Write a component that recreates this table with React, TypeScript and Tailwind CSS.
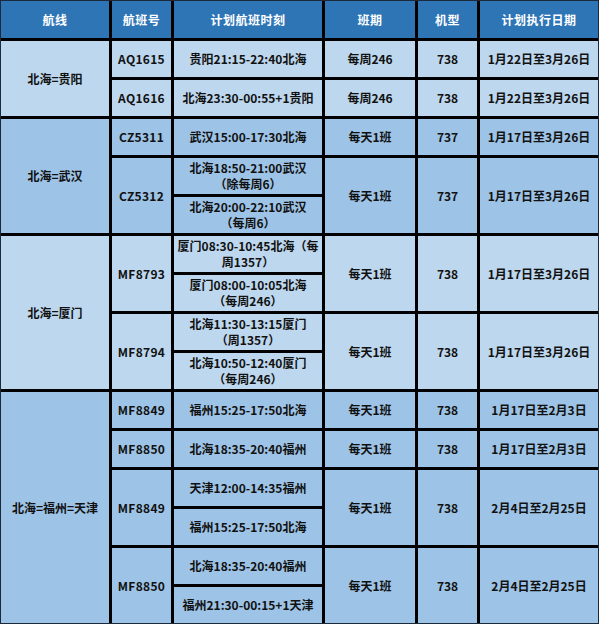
import React from "react";

const LIGHT = "bg-[#bdd7ee]";
const MID = "bg-[#9dc3e6]";

type Cell = {
  text: React.ReactNode;
  pos: string;
  bg: string;
  mono?: boolean;
};

const headers = ["航线", "航班号", "计划航班时刻", "班期", "机型", "计划执行日期"];

const two = (a: string, b: string) => (
  <>
    {a}
    <br />
    {b}
  </>
);

const cells: Cell[] = [
  // 北海=贵阳
  { text: "北海=贵阳", pos: "col-start-1 row-start-2 row-span-2", bg: LIGHT },
  { text: "AQ1615", pos: "col-start-2 row-start-2", bg: LIGHT, mono: true },
  { text: "贵阳21:15-22:40北海", pos: "col-start-3 row-start-2", bg: LIGHT },
  { text: "每周246", pos: "col-start-4 row-start-2", bg: LIGHT },
  { text: "738", pos: "col-start-5 row-start-2", bg: LIGHT },
  { text: "1月22日至3月26日", pos: "col-start-6 row-start-2", bg: LIGHT },
  { text: "AQ1616", pos: "col-start-2 row-start-3", bg: LIGHT, mono: true },
  { text: "北海23:30-00:55+1贵阳", pos: "col-start-3 row-start-3", bg: LIGHT },
  { text: "每周246", pos: "col-start-4 row-start-3", bg: LIGHT },
  { text: "738", pos: "col-start-5 row-start-3", bg: LIGHT },
  { text: "1月22日至3月26日", pos: "col-start-6 row-start-3", bg: LIGHT },

  // 北海=武汉
  { text: "北海=武汉", pos: "col-start-1 row-start-4 row-span-3", bg: MID },
  { text: "CZ5311", pos: "col-start-2 row-start-4", bg: MID, mono: true },
  { text: "武汉15:00-17:30北海", pos: "col-start-3 row-start-4", bg: MID },
  { text: "每天1班", pos: "col-start-4 row-start-4", bg: MID },
  { text: "737", pos: "col-start-5 row-start-4", bg: MID },
  { text: "1月17日至3月26日", pos: "col-start-6 row-start-4", bg: MID },
  { text: "CZ5312", pos: "col-start-2 row-start-5 row-span-2", bg: MID, mono: true },
  { text: two("北海18:50-21:00武汉", "（除每周6）"), pos: "col-start-3 row-start-5", bg: MID },
  { text: two("北海20:00-22:10武汉", "（每周6）"), pos: "col-start-3 row-start-6", bg: MID },
  { text: "每天1班", pos: "col-start-4 row-start-5 row-span-2", bg: MID },
  { text: "737", pos: "col-start-5 row-start-5 row-span-2", bg: MID },
  { text: "1月17日至3月26日", pos: "col-start-6 row-start-5 row-span-2", bg: MID },

  // 北海=厦门
  { text: "北海=厦门", pos: "col-start-1 row-start-7 row-span-4", bg: LIGHT },
  { text: "MF8793", pos: "col-start-2 row-start-7 row-span-2", bg: LIGHT, mono: true },
  { text: two("厦门08:30-10:45北海（每", "周1357）"), pos: "col-start-3 row-start-7", bg: LIGHT },
  { text: two("厦门08:00-10:05北海", "（每周246）"), pos: "col-start-3 row-start-8", bg: LIGHT },
  { text: "每天1班", pos: "col-start-4 row-start-7 row-span-2", bg: LIGHT },
  { text: "738", pos: "col-start-5 row-start-7 row-span-2", bg: LIGHT },
  { text: "1月17日至3月26日", pos: "col-start-6 row-start-7 row-span-2", bg: LIGHT },
  { text: "MF8794", pos: "col-start-2 row-start-9 row-span-2", bg: LIGHT, mono: true },
  { text: two("北海11:30-13:15厦门", "（周1357）"), pos: "col-start-3 row-start-9", bg: LIGHT },
  { text: two("北海10:50-12:40厦门", "（每周246）"), pos: "col-start-3 row-start-10", bg: LIGHT },
  { text: "每天1班", pos: "col-start-4 row-start-9 row-span-2", bg: LIGHT },
  { text: "738", pos: "col-start-5 row-start-9 row-span-2", bg: LIGHT },
  { text: "1月17日至3月26日", pos: "col-start-6 row-start-9 row-span-2", bg: LIGHT },

  // 北海=福州=天津
  { text: "北海=福州=天津", pos: "col-start-1 row-start-11 row-span-6", bg: MID },
  { text: "MF8849", pos: "col-start-2 row-start-11", bg: MID, mono: true },
  { text: "福州15:25-17:50北海", pos: "col-start-3 row-start-11", bg: MID },
  { text: "每天1班", pos: "col-start-4 row-start-11", bg: MID },
  { text: "738", pos: "col-start-5 row-start-11", bg: MID },
  { text: "1月17日至2月3日", pos: "col-start-6 row-start-11", bg: MID },
  { text: "MF8850", pos: "col-start-2 row-start-12", bg: MID, mono: true },
  { text: "北海18:35-20:40福州", pos: "col-start-3 row-start-12", bg: MID },
  { text: "每天1班", pos: "col-start-4 row-start-12", bg: MID },
  { text: "738", pos: "col-start-5 row-start-12", bg: MID },
  { text: "1月17日至2月3日", pos: "col-start-6 row-start-12", bg: MID },
  { text: "MF8849", pos: "col-start-2 row-start-13 row-span-2", bg: MID, mono: true },
  { text: "天津12:00-14:35福州", pos: "col-start-3 row-start-13", bg: MID },
  { text: "福州15:25-17:50北海", pos: "col-start-3 row-start-14", bg: MID },
  { text: "每天1班", pos: "col-start-4 row-start-13 row-span-2", bg: MID },
  { text: "738", pos: "col-start-5 row-start-13 row-span-2", bg: MID },
  { text: "2月4日至2月25日", pos: "col-start-6 row-start-13 row-span-2", bg: MID },
  { text: "MF8850", pos: "col-start-2 row-start-15 row-span-2", bg: MID, mono: true },
  { text: "北海18:35-20:40福州", pos: "col-start-3 row-start-15", bg: MID },
  { text: "福州21:30-00:15+1天津", pos: "col-start-3 row-start-16", bg: MID },
  { text: "每天1班", pos: "col-start-4 row-start-15 row-span-2", bg: MID },
  { text: "738", pos: "col-start-5 row-start-15 row-span-2", bg: MID },
  { text: "2月4日至2月25日", pos: "col-start-6 row-start-15 row-span-2", bg: MID },
];

const headerPos = [
  "col-start-1",
  "col-start-2",
  "col-start-3",
  "col-start-4",
  "col-start-5",
  "col-start-6",
];

export default function App() {
  return (
    <div className="w-[600px] h-[625px] bg-white">
      <div
        className="grid w-[599px] h-[624px] gap-[3px] bg-black border border-[#1a2a3a] grid-cols-[108px_59px_148px_90px_59px_1fr] grid-rows-[37px_repeat(15,1fr)] text-[#111] font-bold"
        style={{ fontFamily: '"Noto Sans CJK SC", "Noto Sans", sans-serif' }}
      >
        {headers.map((h, i) => (
          <div
            key={h}
            className={`${headerPos[i]} row-start-1 bg-[#2e75b6] text-white text-[12px] tracking-[0.5px] flex items-center justify-center`}
          >
            {h}
          </div>
        ))}

        {cells.map((c, i) => (
          <div
            key={i}
            className={`${c.pos} ${c.bg} flex items-center justify-center text-center whitespace-nowrap text-[12px] leading-[16px] ${
              c.mono ? "tracking-[0.3px]" : ""
            }`}
          >
            <span>{c.text}</span>
          </div>
        ))}
      </div>
    </div>
  );
}
